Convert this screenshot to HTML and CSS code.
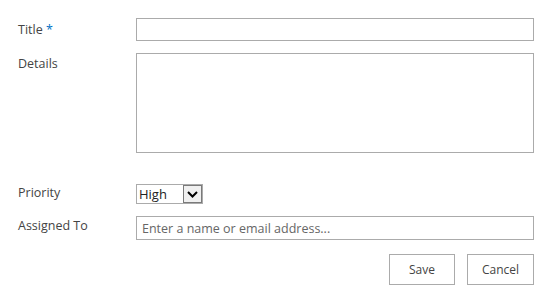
FILE: index.html
```html
<!DOCTYPE html>
<html lang="en">
<head>
    <meta charset="UTF-8">
    <meta name="viewport" content="width=device-width, initial-scale=1.0">
    <title>New Item</title>
    <link rel="stylesheet" href="styles.css">
</head>
<body>
    <!-- New item form -->
    <form class="item-form">
        <div class="field field-title">
            <label for="title">Title <span class="required">*</span></label>
            <input type="text" id="title" class="text-input">
        </div>

        <div class="field field-details">
            <label for="details">Details</label>
            <textarea id="details" class="text-area"></textarea>
        </div>

        <div class="field field-priority">
            <label for="priority">Priority</label>
            <div class="select-box">
                <select id="priority">
                    <option>High</option>
                    <option>Normal</option>
                    <option>Low</option>
                </select>
                <span class="select-arrow">
                    <svg width="11" height="7" viewBox="0 0 11 7">
                        <path d="M1 1 L5.5 5.5 L10 1" fill="none" stroke="#000" stroke-width="2"/>
                    </svg>
                </span>
            </div>
        </div>

        <div class="field field-assigned">
            <label for="assigned">Assigned To</label>
            <input type="text" id="assigned" class="text-input people-input" placeholder="Enter a name or email address...">
        </div>

        <div class="actions">
            <button type="button" class="btn">Save</button>
            <button type="button" class="btn">Cancel</button>
        </div>
    </form>
</body>
</html>
```

FILE: styles.css
```css
body {
    font-family: "Open Sans", "Noto Sans", sans-serif;
    font-size: 12.5px;
    color: #444;
    margin: 0;
    padding: 0;
    background: #fff;
}

.item-form {
    padding: 18px 7px 0 18px;
}

.field {
    display: grid;
    grid-template-columns: 118px 1fr;
    align-items: start;
}

.field label {
    line-height: 18px;
}

.required {
    color: #0072c6;
}

.text-input,
.text-area {
    box-sizing: border-box;
    width: 100%;
    border: 1px solid #ababab;
    margin: 0;
    padding: 0 5px;
    font-family: inherit;
    font-size: 12.5px;
    color: #444;
    background: #fff;
    outline: none;
}

.field-title {
    margin-bottom: 12px;
}

.field-title label {
    padding-top: 3px;
}

.field-title .text-input {
    height: 23px;
}

.field-details {
    margin-bottom: 31px;
}

.field-details label {
    padding-top: 2px;
}

.text-area {
    height: 100px;
    resize: none;
    display: block;
}

.field-priority {
    margin-bottom: 12px;
}

.select-box {
    display: flex;
    width: 67px;
    height: 20px;
    box-sizing: border-box;
    border: 1px solid #ababab;
}

.select-box select {
    appearance: none;
    -webkit-appearance: none;
    border: none;
    outline: none;
    background: #fff;
    flex: 1;
    min-width: 0;
    padding: 0 2px;
    margin: 0;
    font-family: inherit;
    font-size: 13px;
    color: #222;
}

.select-arrow {
    width: 19px;
    box-sizing: border-box;
    border: 1px solid #7a7a7a;
    background: #f0f0f0;
    display: flex;
    align-items: center;
    justify-content: center;
}

.field-assigned label {
    padding-top: 1px;
}

.people-input {
    height: 24px;
}

.people-input::placeholder {
    color: #666;
}

.actions {
    display: flex;
    justify-content: flex-end;
    gap: 12px;
    margin-top: 14px;
}

.btn {
    width: 66px;
    height: 31px;
    border: 1px solid #ababab;
    background: #fff;
    color: #444;
    font-family: inherit;
    font-size: 12px;
    padding: 0;
    cursor: pointer;
}

.btn + .btn {
    width: 67px;
}
```
